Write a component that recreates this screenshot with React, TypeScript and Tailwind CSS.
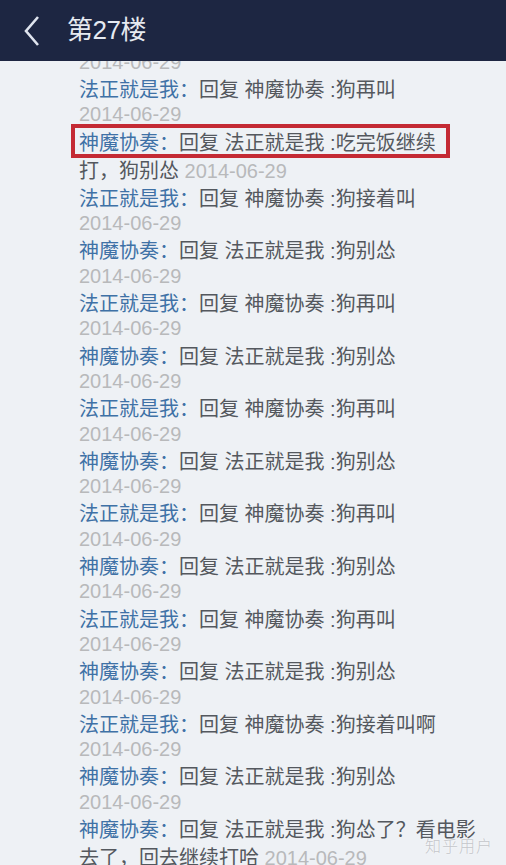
import React from 'react';

const A = '法正就是我';
const B = '神魔协奏';
const DATE = '2014-06-29';

type Row = { from: string; to: string; msg: string; tail?: string; boxed?: boolean };

const rows: Row[] = [
  { from: A, to: B, msg: '狗再叫' },
  { from: B, to: A, msg: '吃完饭继续', tail: '打，狗别怂', boxed: true },
  { from: A, to: B, msg: '狗接着叫' },
  { from: B, to: A, msg: '狗别怂' },
  { from: A, to: B, msg: '狗再叫' },
  { from: B, to: A, msg: '狗别怂' },
  { from: A, to: B, msg: '狗再叫' },
  { from: B, to: A, msg: '狗别怂' },
  { from: A, to: B, msg: '狗再叫' },
  { from: B, to: A, msg: '狗别怂' },
  { from: A, to: B, msg: '狗再叫' },
  { from: B, to: A, msg: '狗别怂' },
  { from: A, to: B, msg: '狗接着叫啊' },
  { from: B, to: A, msg: '狗别怂' },
  { from: B, to: A, msg: '狗怂了？看电影', tail: '去了，回去继续打哈' },
];

function Reply({ row }: { row: Row }) {
  const first = (
    <div className="whitespace-nowrap">
      <span className="text-[#3f71a6]">{row.from}：</span>
      <span>回复 {row.to} :{row.msg}</span>
    </div>
  );

  return (
    <div className="pt-[3.8px]">
      {row.boxed ? (
        <div className="relative">
          {first}
          {/* red annotation box drawn over the screenshot */}
          <div className="absolute left-[-8px] top-[-7px] w-[379px] h-[34px] border-[4px] border-[#c42a34]" />
        </div>
      ) : (
        first
      )}
      {row.tail ? (
        <div className="whitespace-nowrap mt-[3.5px]">
          {row.tail} <span className="text-[#b8b9bb]">{DATE}</span>
        </div>
      ) : (
        <div className="text-[#b8b9bb]">{DATE}</div>
      )}
    </div>
  );
}

export default function App() {
  return (
    <div
      className="relative w-[506px] h-[865px] overflow-hidden bg-[#eef1f5] flex flex-col"
      style={{ fontFamily: '"Liberation Sans", "Noto Sans CJK SC", sans-serif' }}
    >
      {/* Header */}
      <div className="h-[61px] shrink-0 bg-[#1d2642] flex items-center z-10">
        <svg width="16" height="32" viewBox="0 0 16 32" className="ml-[24px]">
          <path d="M14 2 L2 16 L14 30" fill="none" stroke="#dfe4ee" strokeWidth="2.6" strokeLinejoin="miter" />
        </svg>
        <h1 className="ml-[27px] text-[26px] text-[#e6eaf1] tracking-[-0.5px]">第27楼</h1>
      </div>

      {/* List */}
      <div className="flex-1 overflow-hidden">
        <div className="-mt-[11.2px] pl-[79px] text-[20px] leading-[24.4px] text-[#54585e]">
          <div className="text-[#b8b9bb]">{DATE}</div>
          {rows.map((r, i) => (
            <Reply key={i} row={r} />
          ))}
        </div>
      </div>

      {/* watermark */}
      <div
        className="absolute right-[13px] bottom-[8px] text-[16px] font-light text-[#c4c6ca] tracking-[1px]"
        style={{ fontFamily: '"Noto Sans CJK SC", sans-serif', textShadow: '0 0 2px #ffffff' }}
      >
        知乎用户
      </div>
    </div>
  );
}
